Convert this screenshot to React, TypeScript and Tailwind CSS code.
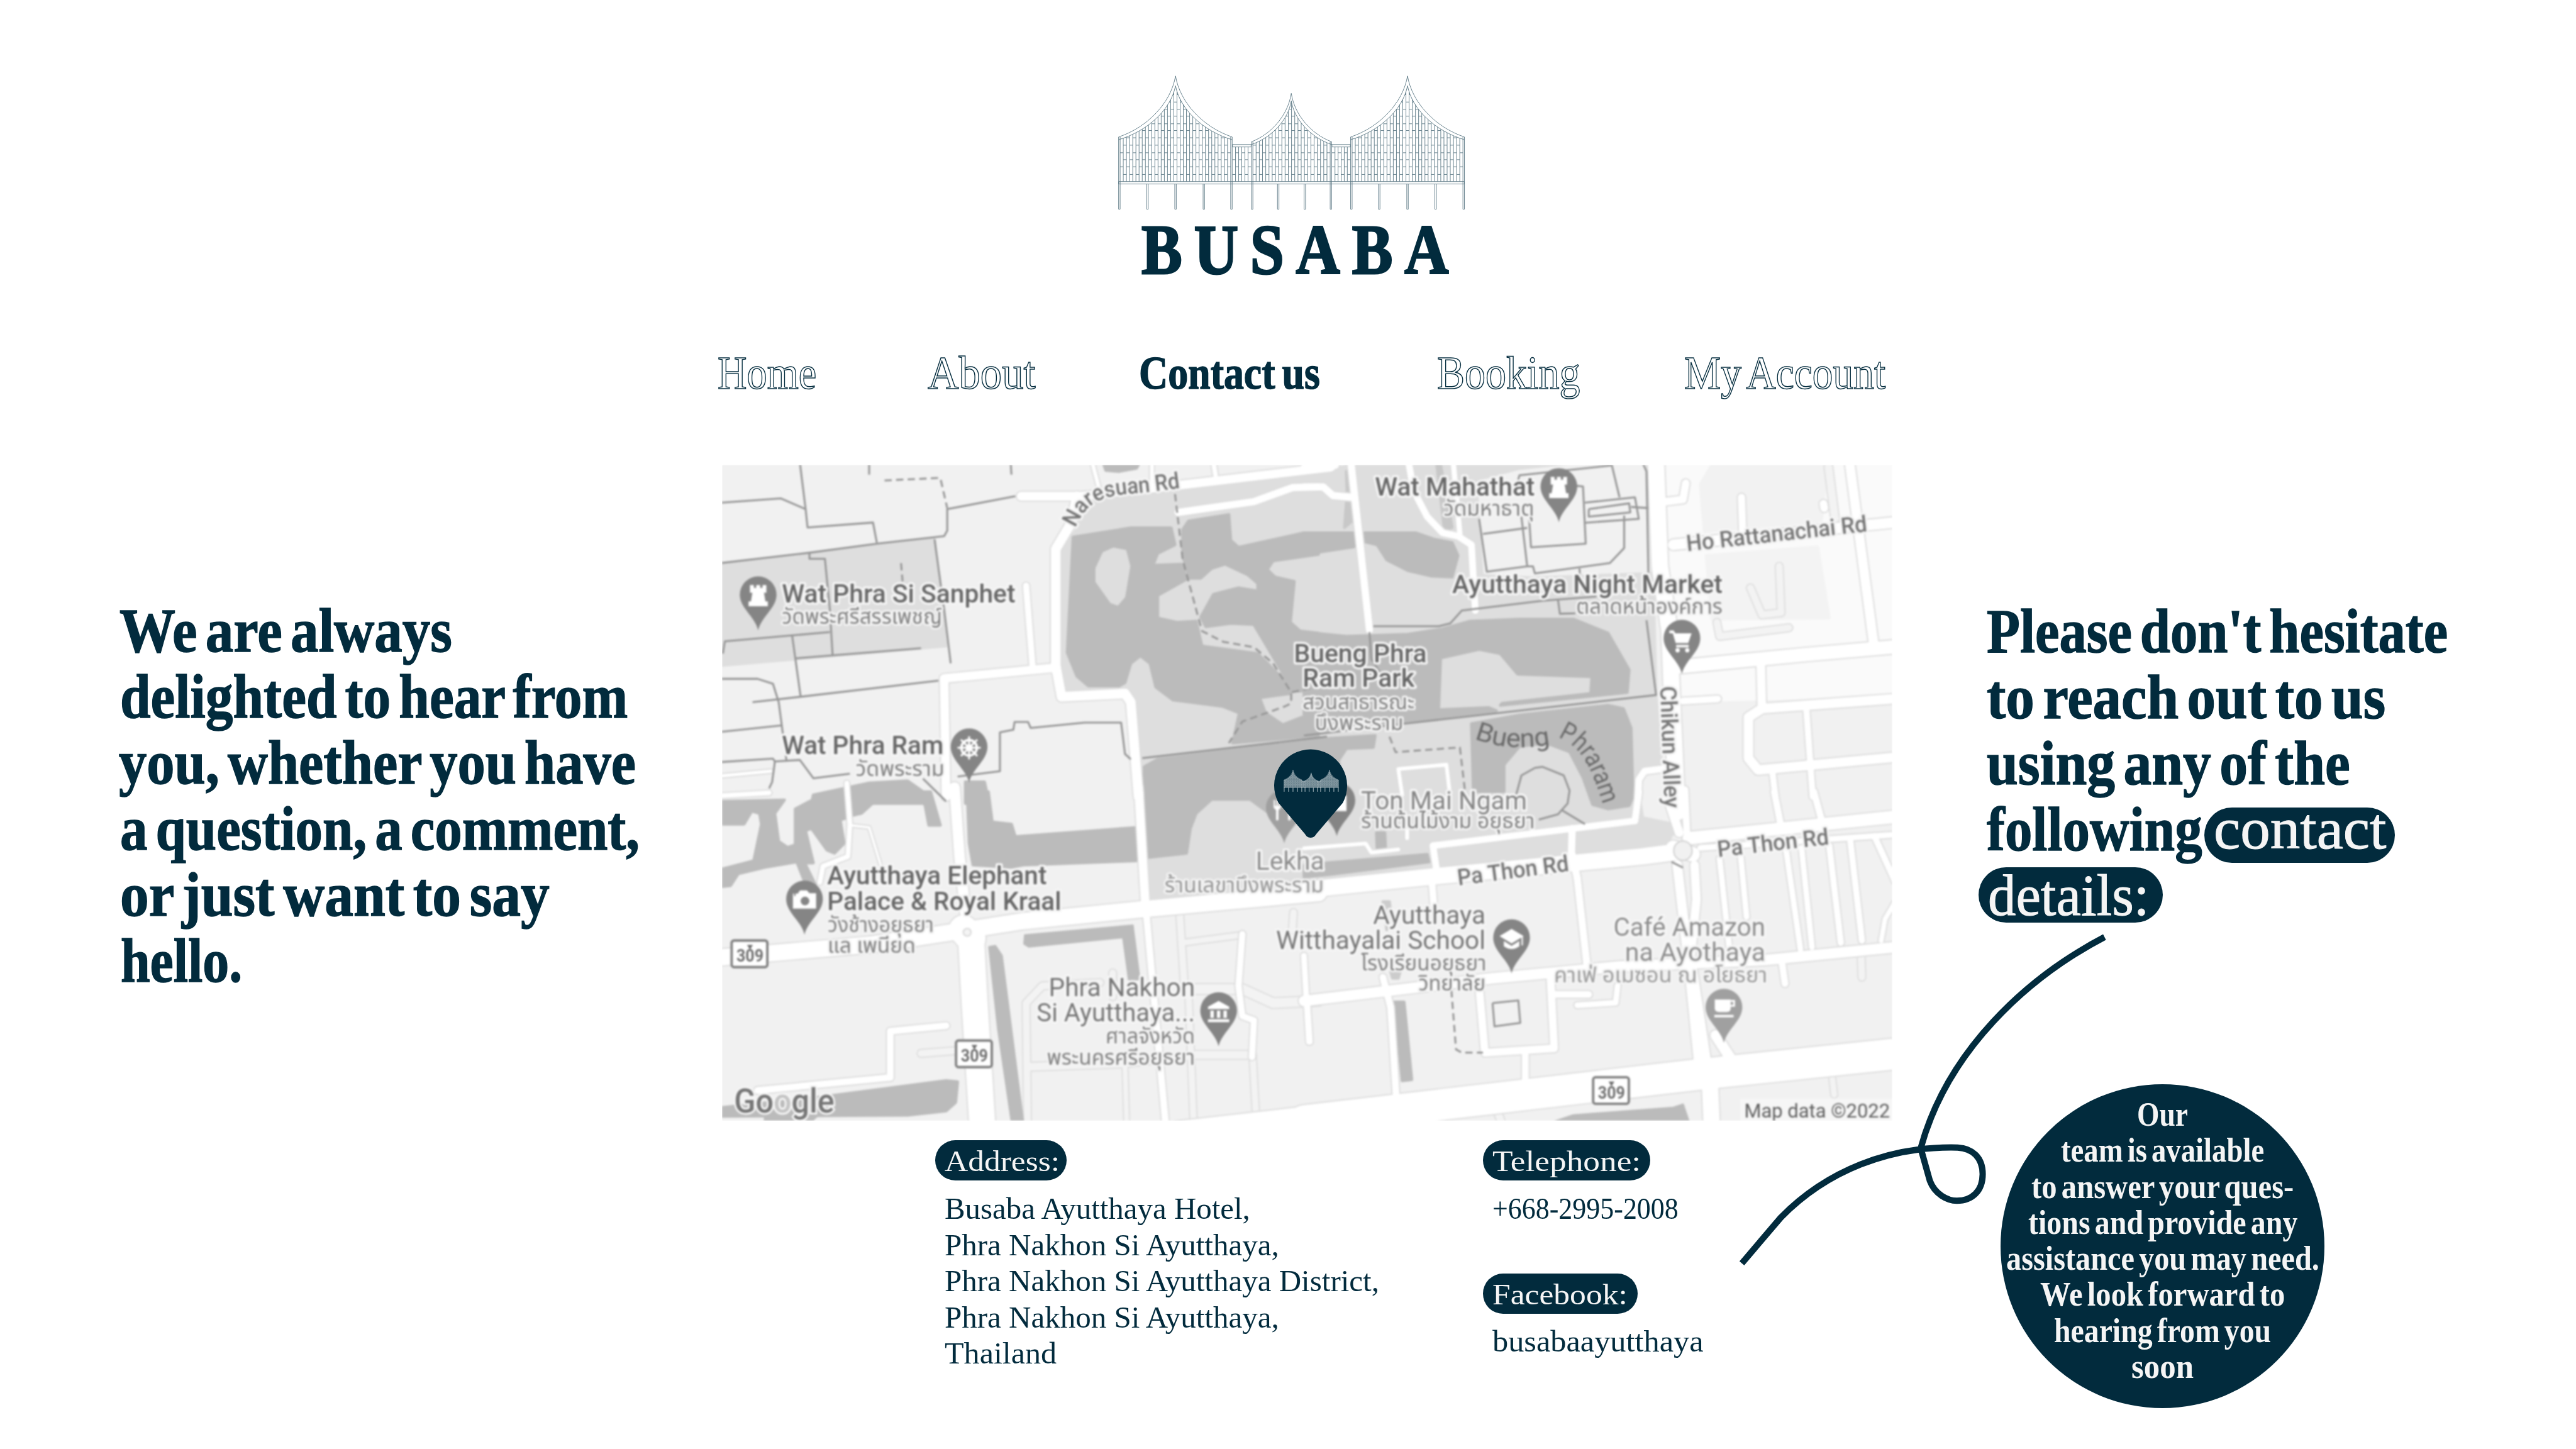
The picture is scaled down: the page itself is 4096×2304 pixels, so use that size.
import { useLayoutEffect, useRef, useState, type ReactNode } from "react";

/* ---------- text helper: one line condensed to a measured width ---------- */

function Fit({ w, className = "", children }: { w: number; className?: string; children: ReactNode }) {
  const ref = useRef<HTMLSpanElement>(null);
  const [scale, setScale] = useState(1);
  useLayoutEffect(() => {
    if (ref.current) setScale(w / ref.current.offsetWidth);
  }, [w]);
  return (
    <span className={"block whitespace-nowrap " + className} style={{ width: w }}>
      <span ref={ref} className="inline-block origin-left align-top" style={{ transform: `scaleX(${scale})` }}>
        {children}
      </span>
    </span>
  );
}

/* ---------- pavilion drawing ---------- */

type House = { l: number; r: number; apex: number; top: number; inner: number; eave: number };
const houses: House[] = [
  { l: 72, r: 533, apex: 303, top: 82, inner: 143, eave: 461 },
  { l: 611, r: 937, apex: 773, top: 190, inner: 237, eave: 491 },
  { l: 1014, r: 1476, apex: 1245, top: 82, inner: 143, eave: 461 },
];
const rows = [198, 244, 289, 332, 379, 421, 466, 512, 559, 602, 646, 694];

function roof(h: House, top: number, eave: number) {
  const a = h.apex - h.l;
  const b = h.r - h.apex;
  const d = eave - top;
  return `M${h.l},${eave} C${h.l + a * 0.51},${eave - d * 0.16} ${h.l + a * 0.92},${eave - d * 0.56} ${h.apex},${top} C${
    h.r - b * 0.92
  },${eave - d * 0.56} ${h.r - b * 0.51},${eave - d * 0.16} ${h.r},${eave}`;
}

function lattice(l: number, r: number, step: number, top: number, offset: number) {
  let d = "";
  const n = Math.round((r - l) / step);
  const s = (r - l) / n;
  for (let i = 1; i < n; i++) d += `M${l + i * s},${top}V738`;
  rows.forEach((y, j) => {
    if (y < top) return;
    for (let i = (j + offset) % 2; i < n; i += 2) d += `M${l + i * s},${y}h${s}`;
  });
  return d;
}

function Pavilion({ id, className }: { id: string; className: string }) {
  return (
    <svg viewBox="60 75 1430 840" preserveAspectRatio="none" className={className} fill="none" stroke="currentColor">
      <defs>
        {houses.map((h, i) => (
          <clipPath key={i} id={`${id}-${i}`}>
            <path d={roof(h, h.inner, h.eave + 17) + ` V740 H${h.l} Z`} />
          </clipPath>
        ))}
      </defs>
      {houses.map((h, i) => (
        <g key={i}>
          <path vectorEffect="non-scaling-stroke" d={roof(h, h.top, h.eave)} />
          <path vectorEffect="non-scaling-stroke" d={roof(h, h.inner, h.eave + 17)} />
          <g clipPath={`url(#${id}-${i})`}>
            <path vectorEffect="non-scaling-stroke" d={lattice(h.l + 6, h.r - 6, 12.9, 140, i === 1 ? 1 : 0)} />
          </g>
          <path vectorEffect="non-scaling-stroke" d={`M${h.l},${h.eave}V910h6V${h.eave}M${h.r},${h.eave}V910h-6V${h.eave}`} />
        </g>
      ))}
      <path vectorEffect="non-scaling-stroke" d="M534,508H610V523H534ZM938,508H1013V523H938Z" />
      <path vectorEffect="non-scaling-stroke" d={lattice(534, 610, 12.7, 523, 1) + lattice(938, 1013, 12.7, 523, 0)} />
      <path vectorEffect="non-scaling-stroke" d="M72,738H1476V753H72Z" />
      <path
        vectorEffect="non-scaling-stroke"
        d="M186,753V910h6V753M300,753V910h6V753M415,753V910h6V753M717,753V910h6V753M825,753V910h6V753M1127,753V910h6V753M1242,753V910h6V753M1356,753V910h6V753"
      />
    </svg>
  );
}

/* ---------- map data: four survey tiles, each with its own origin ---------- */

type Tile = "nw" | "ne" | "sw" | "se";
const origin: Record<Tile, [number, number]> = { nw: [1480, 950], ne: [2700, 950], sw: [1480, 1640], se: [2700, 1640] };

function at(tile: Tile, list: string) {
  const [ox, oy] = origin[tile];
  return list
    .trim()
    .split(/\s+/)
    .map((p) => {
      const [x, y] = p.split(",").map(Number);
      return `${(ox + x * 0.7972).toFixed(1)},${(oy + y * 0.4464).toFixed(1)}`;
    })
    .join(" ");
}

const areas: [Tile, string, string][] = [
  ["ne", "#fafafa", "900,29 1540,29 1540,1100 1090,1120 980,1120"],
  ["ne", "#f2f2f2", "1060,29 1360,29 1345,290 1040,340 1030,120"],
  ["ne", "#f3f3f3", "1045,450 1335,410 1365,740 1060,745"],
  ["nw", "#dedede", "15,490 245,440 570,375 600,870 15,960"],
  ["nw", "#dedede", "940,190 1000,170 1200,130 1590,55 1590,1568 1100,1568 1090,1100 1070,1070 910,1080 890,960 895,430 940,330"],
  ["ne", "#dedede", "0,75 130,29 900,29 915,1100 930,1440 870,1450 865,1568 0,1568"],
  ["ne", "#f1f1f1", "455,110 560,60 720,29 885,29 900,520 600,540 470,530"],
  ["se", "#dedede", "0,0 870,0 880,120 960,150 960,190 940,250 700,290 340,350 0,420"],
  ["sw", "#dedede", "1110,0 1568,0 1568,475 1120,515"],
  ["nw", "#bbbbbb", "1010,29 1100,29 1095,45 1050,60 1015,55"],
  ["nw", "#bbbbbb", "930,365 1080,322 1185,322 1195,400 1150,440 1138,495 1212,490 1225,560 1150,635 1150,740 1200,760 1250,755 1265,870 1410,905 1480,1030 1495,1090 1415,1110 1430,1180 1475,1235 1525,1200 1568,1215 1568,1285 1345,1320 1362,1180 1320,1150 1190,1120 1145,1060 1130,950 1105,915 1080,950 1065,1040 1050,1055 970,1055 940,1010 915,900"],
  ["nw", "#dedede", "1035,420 1065,430 1075,500 1062,640 1045,675 1030,665 992,570 992,510 1010,440"],
  ["nw", "#bbbbbb", "1215,330 1230,290 1335,260 1340,380 1360,412 1530,345 1568,345 1568,445 1450,475 1435,515 1455,550 1505,570 1495,760 1520,800 1568,810 1568,1075 1500,1080 1470,980 1400,770 1340,765 1275,780 1262,735 1295,630 1360,600 1410,615 1410,580 1385,540 1325,490 1290,510 1262,555 1232,555 1215,450"],
  ["nw", "#bbbbbb", "1115,1430 1150,1395 1568,1305 1568,1568 1115,1568"],
  ["ne", "#bbbbbb", "0,345 130,345 130,410 0,445"],
  ["ne", "#bbbbbb", "155,345 290,345 340,375 385,390 400,450 385,550 330,545 270,520 215,470 190,400 155,385"],
  ["ne", "#c8c8c8", "110,60 125,60 125,290 105,320 112,160"],
  ["ne", "#c8c8c8", "345,29 355,29 385,320 365,335"],
  ["ne", "#bbbbbb", "0,805 110,825 270,815 360,790 430,755 560,745 700,745 790,810 845,980 840,1085 510,1145 515,1135 745,1090 748,1012 555,1000 510,905 455,885 355,925 350,1165 480,1155 500,1170 300,1212 0,1268"],
  ["ne", "#bbbbbb", "0,1305 185,1285 180,1340 110,1345 90,1400 100,1568 0,1568"],
  ["ne", "#bbbbbb", "435,1230 560,1190 790,1145 830,1160 850,1250 855,1568 845,1610 790,1625 750,1605 725,1480 690,1360 630,1320 560,1335 520,1420 520,1545 440,1545"],
  ["nw", "#bbbbbb", "255,1560 400,1505 500,1495 560,1570 560,1600 250,1600"],
  ["nw", "#bbbbbb", "650,1500 700,1500 712,1600 650,1600"],
  ["sw", "#bbbbbb", "15,45 180,38 155,100 165,230 188,258 210,245 230,320 260,430 235,430 212,325 130,350 60,380 40,435 15,440 15,360 100,320 120,150 115,100 95,90 75,150 15,150"],
  ["sw", "#bbbbbb", "208,80 245,45 290,10 345,0 345,120 325,130 335,240 310,285 290,270 250,170 235,180 255,330 225,330 208,240"],
  ["sw", "#bbbbbb", "355,0 560,0 585,155 555,155 545,60 510,10 470,0 430,20 380,100 355,110"],
  ["sw", "#bbbbbb", "655,0 710,0 720,140 770,150 780,208 1100,165 1095,320 800,340 770,350 670,340 660,240"],
  ["sw", "#bbbbbb", "1115,0 1450,0 1440,100 1390,35 1290,35 1250,100 1235,170 1225,285 1125,305"],
  ["sw", "#bbbbbb", "15,1465 300,1410 600,1340 630,1345 625,1440 600,1480 500,1500 15,1505"],
  ["sw", "#bbbbbb", "130,1500 265,1500 250,1525 130,1525"],
  ["se", "#bbbbbb", "60,330 320,290 325,325 60,385 0,395 0,340"],
  ["se", "#bbbbbb", "188,190 210,190 212,265 190,270"],
  ["se", "#bbbbbb", "235,975 260,975 280,1335 255,1340"],
  ["se", "#cccccc", "205,510 222,510 228,600 215,640"],
  ["se", "#cccccc", "225,835 250,835 245,865 230,865"],
];
const upperAreas: [Tile, string, string][] = [
  ["sw", "#bbbbbb", "712,720 728,715 745,760 800,1525 770,1525 735,1100"],
  ["sw", "#bbbbbb", "805,665 1085,620 1103,870 1075,870 1060,675 815,718 803,705"],
  ["se", "#bbbbbb", "650,1530 700,1500 960,1465 985,1450 1000,1530"],
];

/* lanes carry an outline only, roads are filled white */
const lanes: [Tile, number, string][] = [
  ["ne", 14, "1235,500 1240,715 1190,725 1160,600"],
  ["ne", 14, "1073,760 1080,825 1260,785"],
  ["ne", 16, "1363,40 1380,280"],
  ["sw", 14, "630,1200 535,1213"],
  ["sw", 14, "1207,560 1220,920"],
  ["sw", 12, "1215,700 1365,665"],
  ["sw", 20, "1230,915 1370,915 1450,980 1568,970"],
  ["sw", 14, "1503,560 1500,640"],
  ["sw", 14, "812,1568 808,980 850,900 1000,885"],
  ["sw", 14, "1033,840 1033,950"],
  ["sw", 16, "820,1275 1060,1260 1250,1220 1395,1220"],
  ["sw", 10, "1065,1270 1070,1568"],
  ["sw", 13, "1230,930 1243,1520"],
  ["sw", 13, "1397,1230 1405,1490"],
  ["se", 14, "1448,760 1450,860"],
  ["se", 12, "1373,1330 1378,1405"],
  ["se", 15, "500,1470 520,1568"],
];

const roads: [Tile, number, string][] = [
  ["nw", 18, "795,175 950,175 1200,125 1600,40"],
  ["ne", 18, "0,48 80,29"],
  ["nw", 8, "980,20 1000,155"],
  ["nw", 8, "1135,20 1135,120"],
  ["nw", 10, "1295,20 1300,75"],
  ["nw", 20, "940,175 925,300 885,420 885,960 900,1105 1065,1090 1080,1130 1100,1568"],
  ["nw", 18, "885,970 825,980 595,1020 600,1568"],
  ["nw", 13, "825,970 808,590"],
  ["nw", 15, "1203,250 1400,200 1500,135 1568,132"],
  ["ne", 15, "0,132 50,132 75,172 125,180"],
  ["ne", 15, "122,20 170,795"],
  ["ne", 14, "272,20 285,150 320,270 360,345 400,360 435,400 445,705"],
  ["ne", 11, "388,20 405,350"],
  ["ne", 34, "915,20 925,500 950,800 955,1050 970,1640"],
  ["se", 18, "945,30 975,190"],
  ["ne", 22, "960,400 1568,290"],
  ["ne", 20, "1418,20 1482,880"],
  ["ne", 16, "1350,210 1352,230"],
  ["ne", 16, "992,115 985,190 940,200"],
  ["ne", 15, "1137,180 1140,340"],
  ["ne", 28, "980,965 1300,910 1568,868"],
  ["ne", 18, "1187,940 1190,1160"],
  ["ne", 14, "985,1125 1075,1115"],
  ["ne", 20, "1568,1110 1300,1145 1190,1160 1155,1200 1155,1390 1180,1445 1568,1380"],
  ["ne", 13, "1305,1150 1322,1568"],
  ["ne", 13, "1217,1450 1225,1568"],
  ["ne", 14, "950,1435 885,1450 870,1490 868,1568"],
  ["se", 14, "870,0 860,135 700,170 335,250 345,370"],
  ["ne", 8, "255,1560 245,1440 370,1420 378,1540"],
  ["sw", 34, "0,770 200,740 400,710 620,650 800,600 1110,545 1568,470"],
  ["se", 34, "0,455 350,390 880,300 985,275"],
  ["sw", 22, "622,-20 635,300 650,560"],
  ["sw", 60, "645,640 665,680"],
  ["sw", 54, "665,680 675,1000 695,1568"],
  ["sw", 18, "1100,-20 1117,500"],
  ["sw", 14, "1117,500 1135,850 1172,1568"],
  ["sw", 10, "342,-40 350,150 345,300 280,345 272,420"],
  ["sw", 5, "350,155 400,165 430,340"],
  ["sw", 10, "0,20 140,5"],
  ["nw", 7, "0,1475 145,1450"],
  ["sw", 14, "600,1085 455,1110 455,1325 110,1385"],
  ["sw", 13, "1370,660 1360,900 1370,1040 1400,1060 1395,1230"],
  ["sw", 12, "1530,760 1543,1160"],
  ["sw", 64, "1150,1610 1568,1525"],
  ["se", 64, "0,1525 1030,1310 1568,1210"],
  ["se", 34, "1055,1350 1060,1568"],
  ["se", 14, "332,410 337,525"],
  ["se", 15, "697,170 695,280 710,400 735,800"],
  ["se", 8, "0,262 160,240 175,282 245,268"],
  ["se", 8, "268,180 268,215"],
  ["se", 26, "1000,215 1568,110"],
  ["se", 12, "1030,260 1568,195"],
  ["se", 30, "960,260 1010,290"],
  ["se", 14, "990,-10 995,190"],
  ["se", 20, "970,340 1000,800 1025,1240"],
  ["se", 18, "1015,340 1020,500 1005,760 1045,1230"],
  ["se", 22, "1070,1130 1110,1240"],
  ["se", 12, "1080,310 1105,720"],
  ["se", 12, "1135,300 1150,580"],
  ["se", 12, "1253,270 1290,730"],
  ["se", 12, "1293,260 1320,720"],
  ["se", 13, "1365,250 1395,700"],
  ["se", 13, "1420,230 1450,690"],
  ["se", 13, "1482,205 1545,450"],
  ["se", 10, "1540,500 1510,590 1500,690"],
  ["se", 14, "1222,0 1238,145"],
  ["se", 14, "1325,0 1345,130"],
  ["se", 22, "1568,715 1200,780 820,810 490,865 0,970"],
  ["se", 16, "455,900 470,1210 650,1190 640,840"],
  ["se", 14, "575,1210 575,1380"],
  ["se", 14, "205,860 225,1000 240,1430"],
  ["se", 14, "650,940 740,940"],
  ["se", 12, "815,900 810,978 710,990"],
  ["se", 12, "8,970 15,1160"],
  ["se", 14, "1242,790 1250,890"],
];

const lines: [Tile, string][] = [
  ["nw", "15,205 170,185 235,235"],
  ["nw", "220,20 235,235 240,320 410,297 420,390"],
  ["nw", "15,485 245,437 420,395 595,360 603,335 603,235 780,175"],
  ["nw", "245,437 245,465 285,465 298,700 305,910"],
  ["nw", "570,375 595,700 612,950"],
  ["nw", "20,905 25,848 298,805"],
  ["nw", "200,822 222,1105"],
  ["nw", "210,927 535,880"],
  ["nw", "97,1130 222,1105 580,1030"],
  ["nw", "15,1022 110,1022 150,1045 165,1130 185,1400"],
  ["nw", "15,1268 172,1238"],
  ["nw", "15,1408 150,1392 155,1405 220,1398 255,1483 350,1462"],
  ["nw", "155,1405 148,1500 140,1530"],
  ["nw", "400,20 400,75"],
  ["nw", "768,20 770,75"],
  ["nw", "540,1485 600,1590"],
  ["nw", "630,1475 740,1450 740,1270 775,1258 778,1222 813,1222 820,1250 960,1225 1055,1225 1065,1370 1080,1395"],
  ["nw", "1110,1390 1590,1290"],
  ["ne", "0,1285 260,1230 915,1097 890,750"],
  ["ne", "895,530 890,60 880,20"],
  ["ne", "180,778 350,778 380,765 410,705 620,660 760,640"],
  ["ne", "660,655 665,720 705,718"],
  ["ne", "170,805 175,930 200,1000"],
  ["ne", "455,280 475,525 580,500 565,270"],
  ["ne", "465,350 580,322"],
  ["ne", "580,500 595,500 600,533 795,485 832,415 832,265"],
  ["ne", "555,110 560,78 800,32 820,180"],
  ["ne", "585,280 590,412 732,395 725,130 700,125"],
  ["ne", "730,205 860,180 870,280 730,298"],
  ["ne", "740,235 845,208 848,250 740,270 740,235"],
  ["ne", "850,225 895,230"],
  ["ne", "716,510 717,545"],
  ["ne", "550,1568 565,1470 600,1435 620,1430 675,1470 690,1540 685,1600 660,1650 610,1675"],
  ["se", "670,85 730,150"],
  ["se", "490,980 557,968 562,1072 495,1088 490,980"],
  ["se", "955,325 985,352"],
];
const dashed: [Tile, string][] = [
  ["nw", "440,102 585,90 603,230"],
  ["nw", "1195,165 1215,470 1265,800 1320,850 1400,875 1450,950 1497,1085 1560,1060"],
  ["nw", "1497,1090 1497,1135 1480,1150 1370,1220 1335,1320"],
  ["nw", "483,485 487,570"],
  ["ne", "222,1290 238,1362 405,1340 420,1568"],
  ["se", "383,920 395,1195 410,1210 465,1210"],
];

type Label = [x: number, y: number, w: number, text: string, color?: string, weight?: number];
const names: Label[] = [
  [1618, 1248, 484, "Wat Phra Si Sanphet", "#666666", 500],
  [1618, 1562, 335, "Wat Phra Ram", "#666666", 500],
  [2847, 1027, 331, "Wat Mahathat", "#666666", 500],
  [3007, 1229, 560, "Ayutthaya Night Market", "#666666", 500],
  [2679, 1372, 275, "Bueng Phra", "#666666", 500],
  [2697, 1423, 232, "Ram Park", "#666666", 500],
  [1712, 1832, 455, "Ayutthaya Elephant", "#666666", 500],
  [1712, 1885, 485, "Palace & Royal Kraal", "#666666", 500],
  [2171, 2063, 303, "Phra Nakhon", "#757575", 400],
  [2146, 2115, 328, "Si Ayutthaya...", "#757575", 400],
  [2843, 1913, 233, "Ayutthaya", "#757575", 400],
  [2642, 1965, 434, "Witthayalai School", "#757575", 400],
  [2818, 1676, 344, "Ton Mai Ngam", "#858585", 400],
  [2600, 1802, 142, "Lekha", "#8d8d8d", 400],
  [3341, 1938, 315, "Café Amazon", "#8d8d8d", 400],
  [3365, 1990, 291, "na Ayothaya", "#8d8d8d", 400],
];
const thai: Label[] = [
  [1618, 1293, 332, "วัดพระศรีสรรเพชญ์"],
  [1771, 1607, 184, "วัดพระราม"],
  [2989, 1068, 188, "วัดมหาธาตุ"],
  [3264, 1272, 303, "ตลาดหน้าองค์การ"],
  [2697, 1470, 232, "สวนสาธารณะ"],
  [2722, 1512, 184, "บึงพระราม"],
  [2818, 1716, 360, "ร้านต้นไม้งาม อยุธยา"],
  [2411, 1848, 330, "ร้านเลขาบึงพระราม", "#959595"],
  [1713, 1931, 220, "วังช้างอยุธยา"],
  [1713, 1973, 182, "แล เพนียด"],
  [2289, 2161, 185, "ศาลจังหวัด"],
  [2167, 2205, 307, "พระนครศรีอยุธยา"],
  [2818, 2010, 260, "โรงเรียนอยุธยา"],
  [2937, 2051, 139, "วิทยาลัย"],
  [3218, 2034, 442, "คาเฟ่ อเมซอน ณ อโยธยา", "#9a9a9a"],
];

/* pin glyphs are drawn around the centre of the pin's head */
const glyphs = {
  rook: <path d="M-17,-22h8v6h5v-6h8v6h5v-6h8v16h-5l3,18h5v10h-40v-10h5l3,-18h-5z" />,
  wheel: (
    <g fill="none" stroke="#fff" strokeWidth="5">
      <circle r="16" />
      <circle r="5" />
      <path strokeWidth="4" d="M0,-24V24M-24,0H24M-17,-17L17,17M17,-17L-17,17" />
    </g>
  ),
  cart: (
    <g>
      <path d="M-26,-18h9l3,6h34l-7,20h-26l-6,-20h-7z" />
      <path d="M-12,12h26v5h-26z" />
      <circle cx="-9" cy="23" r="4.5" />
      <circle cx="11" cy="23" r="4.5" />
    </g>
  ),
  camera: (
    <g>
      <path d="M-24,-14h10l5,-6h14l5,6h14v32h-48z" />
      <circle cx="1" cy="2" r="9" fill="#858585" />
      <path stroke="#858585" strokeWidth="3" d="M-20,-22v14M-27,-15h14" />
    </g>
  ),
  museum: <path d="M0,-22L22,-10v5h-44v-5zM-17,-2h7v15h-7zM-3.500,-2h7v15h-7zM10,-2h7v15h-7zM-22,16h44v6h-44z" />,
  school: (
    <g>
      <path d="M0,-20L25,-5L0,10L-25,-5z" />
      <path d="M-16,5L0,15L16,5V16Q0,27 -16,16z" />
      <path fill="none" stroke="#fff" strokeWidth="3" d="M22,-5V14" />
    </g>
  ),
  cup: (
    <g>
      <path d="M-19,-18h33v18q0,8 -8,8h-16q-9,0 -9,-8z" />
      <path fill="none" stroke="#fff" strokeWidth="4" d="M14,-15h7v10h-7" />
      <path d="M-20,14h40v5h-40z" />
    </g>
  ),
  fork: <path d="M-22,-18h3v12h3v-12h3v12h3v-12h3v16l-5,5v21h-5v-21l-5,-5zM8,-22q10,4 10,22h-5v24h-5z" />,
  bag: <path d="M-18,-12h8q0,-12 10,-12q10,0 10,12h10v32h-38z" />,
};
const pins: [number, number, keyof typeof glyphs, string][] = [
  [1569, 1306, "rook", "#858585"],
  [2006, 1621, "wheel", "#858585"],
  [3228, 1082, "rook", "#858585"],
  [3483, 1396, "cart", "#858585"],
  [1665, 1936, "camera", "#858585"],
  [2523, 2167, "museum", "#858585"],
  [3130, 2016, "school", "#858585"],
  [3570, 2160, "cup", "#a0a0a0"],
  [2659, 1747, "fork", "#a0a0a0"],
  [2768, 1732, "bag", "#858585"],
];
const shields: [number, number][] = [
  [1514, 1948],
  [1979, 2155],
  [3299, 2231],
];

function CityMap() {
  return (
    <svg viewBox="1494 963 2425 1358" preserveAspectRatio="none" className="block h-full w-full blur-[1.4px]">
      <rect x="1480" y="950" width="2460" height="1400" fill="#f1f1f1" />
      {areas.map(([t, c, p], i) => (
        <polygon key={i} points={at(t, p)} fill={c} stroke={c} strokeWidth="6" strokeLinejoin="round" />
      ))}
      <g fill="none" stroke="#dddddd" strokeLinecap="round" strokeLinejoin="round">
        {lanes.map(([t, w, p], i) => (
          <polyline key={i} points={at(t, p)} strokeWidth={w + 5} />
        ))}
      </g>
      <g fill="none" stroke="#f3f3f3" strokeLinecap="round" strokeLinejoin="round">
        {lanes.map(([t, w, p], i) => (
          <polyline key={i} points={at(t, p)} strokeWidth={w} />
        ))}
      </g>
      <g fill="none" stroke="#dcdcdc" strokeLinecap="round" strokeLinejoin="round">
        {roads.map(([t, w, p], i) => (
          <polyline key={i} points={at(t, p)} strokeWidth={w + 5} />
        ))}
      </g>
      <g fill="none" stroke="#ffffff" strokeLinecap="round" strokeLinejoin="round">
        {roads.map(([t, w, p], i) => (
          <polyline key={i} points={at(t, p)} strokeWidth={w} />
        ))}
      </g>
      {upperAreas.map(([t, c, p], i) => (
        <polygon key={i} points={at(t, p)} fill={c} stroke={c} strokeWidth="4" strokeLinejoin="round" />
      ))}
      <circle cx="2002" cy="1931" r="8" fill="#f4f4f4" stroke="#dadada" strokeWidth="3" />
      <ellipse cx="3485" cy="1762" rx="19" ry="20" fill="#f1f1f1" stroke="#d4d4d4" strokeWidth="3" />
      <g fill="none" stroke="#979797" strokeWidth="4" strokeLinejoin="round">
        {lines.map(([t, p], i) => (
          <polyline key={i} points={at(t, p)} />
        ))}
        {dashed.map(([t, p], i) => (
          <polyline key={i} points={at(t, p)} strokeDasharray="15 9" />
        ))}
      </g>

      {pins.map(([x, y, g, c], i) => (
        <g key={i} transform={`translate(${x} ${y})`}>
          <path fill={c} d="M0,0C-6,-28 -38,-46 -38,-74A38,38 0 1 1 38,-74C38,-46 6,-28 0,0Z" />
          <g fill="#ffffff" transform="translate(0 -72)">
            {glyphs[g]}
          </g>
        </g>
      ))}

      <g className="font-['Roboto',sans-serif]" stroke="#f6f6f6" strokeWidth="9" strokeLinejoin="round" paintOrder="stroke">
        {names.map(([x, y, w, s, c, wt], i) => (
          <text key={i} x={x} y={y} textLength={w} lengthAdjust="spacingAndGlyphs" fontSize="53" fontWeight={wt} fill={c}>
            {s}
          </text>
        ))}
        <g fontSize="47" fontWeight="500" fill="#757575">
          <path id="naresuan" d="M2226,1094C2246,1050 2268,1030 2330,1024Q2390,1019 2452,1010" fill="none" stroke="none" />
          <text>
            <textPath href="#naresuan" textLength="248" lengthAdjust="spacingAndGlyphs">
              Naresuan Rd
            </textPath>
          </text>
          <text transform="translate(3494 1142) rotate(-6.3)" textLength="376" lengthAdjust="spacingAndGlyphs">
            Ho Rattanachai Rd
          </text>
          <text transform="translate(3020 1834) rotate(-7.500)" textLength="232" lengthAdjust="spacingAndGlyphs">
            Pa Thon Rd
          </text>
          <text transform="translate(3558 1775) rotate(-6.500)" textLength="232" lengthAdjust="spacingAndGlyphs">
            Pa Thon Rd
          </text>
          <text transform="translate(3438 1422) rotate(88)" textLength="252" lengthAdjust="spacingAndGlyphs">
            Chikun Alley
          </text>
        </g>
        <g fill="#6a6a6a" fontSize="54" stroke="none">
          <path id="lake-west" d="M3053,1530Q3130,1560 3222,1540" fill="none" />
          <path id="lake-east" d="M3226,1527C3285,1550 3300,1610 3322,1674" fill="none" />
          <text>
            <textPath href="#lake-west" textLength="160" lengthAdjust="spacingAndGlyphs">
              Bueng
            </textPath>
          </text>
          <text>
            <textPath href="#lake-east" textLength="174" lengthAdjust="spacingAndGlyphs">
              Phraram
            </textPath>
          </text>
        </g>
      </g>
      <g
        className="font-['Noto_Sans_Thai','Noto_Sans','Loma',sans-serif]"
        stroke="#f4f4f4"
        strokeWidth="8"
        strokeLinejoin="round"
        paintOrder="stroke"
      >
        {thai.map(([x, y, w, s, c], i) => (
          <text key={i} x={x} y={y} textLength={w} lengthAdjust="spacingAndGlyphs" fontSize="44" fill={c ?? "#808080"}>
            {s}
          </text>
        ))}
      </g>

      {shields.map(([x, y], i) => (
        <g key={i}>
          <rect x={x} y={y} width="74" height="55" rx="5" fill="#ffffff" stroke="#808080" strokeWidth="5" />
          <path d={`M${x + 32},${y + 9}h12l-6,10z`} fill="#6b6b6b" />
          <text
            x={x + 10}
            y={y + 44}
            textLength="56"
            lengthAdjust="spacingAndGlyphs"
            fontSize="36"
            fontWeight="700"
            fill="#6f6f6f"
            className="font-['Roboto',sans-serif]"
          >
            309
          </text>
        </g>
      ))}

      <text
        x="1519"
        y="2304"
        textLength="208"
        lengthAdjust="spacingAndGlyphs"
        fontSize="69"
        fontWeight="500"
        fill="#757575"
        stroke="#f6f6f6"
        strokeWidth="8"
        paintOrder="stroke"
        className="font-['Roboto',sans-serif]"
      >
        Go<tspan fill="#c4c4c4">o</tspan>gle
      </text>
      <rect x="3604" y="2275" width="330" height="60" fill="#f6f6f6" />
      <text
        x="3612"
        y="2314"
        textLength="302"
        lengthAdjust="spacingAndGlyphs"
        fontSize="41"
        fill="#5f5f5f"
        className="font-['Roboto',sans-serif]"
      >
        Map data ©2022
      </text>
    </svg>
  );
}

function HotelPin() {
  return (
    <div className="absolute left-[878px] top-[450px] h-[143px] w-[116px]">
      <svg viewBox="-75 -186 150 186" className="absolute inset-0 h-full w-full" preserveAspectRatio="none">
        <path fill="#022b3d" d="M0,0C-6,0 -9,-3 -12,-8L-66,-72A75,75 0 1 1 66,-72L12,-8C9,-3 6,0 0,0Z" />
      </svg>
      <Pavilion id="pin" className="absolute left-[15px] top-[35px] h-[35px] w-[88px] stroke-[0.5px] text-[#c9d3d7]" />
    </div>
  );
}

/* ---------- page ---------- */

const nav: { label: string; w: number; gap: string; active?: boolean }[] = [
  { label: "Home", w: 157, gap: "" },
  { label: "About", w: 172, gap: "ml-[177px]" },
  { label: "Contact us", w: 288, gap: "ml-[164px]", active: true },
  { label: "Booking", w: 227, gap: "ml-[186px]" },
  { label: "My Account", w: 320, gap: "ml-[166px]" },
];

const intro: [string, number, string][] = [
  ["We are always", 529, "-ml-[3px]"],
  ["delighted to hear from", 807, "-ml-[2px]"],
  ["you, whether you have", 822, "-ml-[4px]"],
  ["a question, a comment,", 826, "-ml-[2px]"],
  ["or just want to say", 683, "-ml-[2px]"],
  ["hello.", 193, "-ml-[1px]"],
];

const invite: [string, number][] = [
  ["Please don't hesitate", 733],
  ["to reach out to us", 634],
  ["using any of the", 578],
];

const team: [string, number][] = [
  ["Our", 81],
  ["team is available", 323],
  ["to answer your ques-", 417],
  ["tions and provide any", 428],
  ["assistance you may need.", 498],
  ["We look forward to", 389],
  ["hearing from you", 345],
  ["soon", 99],
];

const address: [string, number][] = [
  ["Busaba Ayutthaya Hotel,", 486],
  ["Phra Nakhon Si Ayutthaya,", 532],
  ["Phra Nakhon Si Ayutthaya District,", 691],
  ["Phra Nakhon Si Ayutthaya,", 532],
  ["Thailand", 178],
];

function Tag({ label, text, className }: { label: string; text: number; className: string }) {
  return (
    <h3 className={"h-16 rounded-full bg-[#022b3d] pl-[15px] text-[47px] leading-[66px] text-[#f5f5f5] " + className}>
      <Fit w={text}>{label}</Fit>
    </h3>
  );
}

export default function App() {
  return (
    <div className="relative flex h-[2304px] w-[4096px] flex-col overflow-hidden bg-white font-['Liberation_Serif',serif] text-[#022b3d]">
      <header className="pt-[119px]">
        <div className="ml-[1774px] w-[560px]">
          <Pavilion id="logo" className="block h-[215px] w-[560px] stroke-[0.9px] text-[#5b7884]" />
          <h1 className="ml-[41px] mt-[6px] text-[113px] font-bold leading-none tracking-[22px] [-webkit-text-stroke:3px_#022b3d]">
            <Fit w={507}>BUSABA</Fit>
          </h1>
        </div>
        <nav className="ml-[1141px] mt-[101px] flex h-20 text-[73px] leading-[80px] [word-spacing:-0.08em]">
          {nav.map((n) => (
            <a key={n.label} className={n.gap}>
              <Fit
                w={n.w}
                className={
                  n.active
                    ? "font-bold [-webkit-text-stroke:1.5px_#022b3d]"
                    : "text-white [-webkit-text-stroke:1.5px_#022b3d]"
                }
              >
                {n.label}
              </Fit>
            </a>
          ))}
        </nav>
      </header>

      <main className="mt-[105px] flex flex-1">
        <section className="w-[1148px] shrink-0 pl-[193px] pt-[211px] text-[99px] font-bold leading-[105px] [-webkit-text-stroke:1.5px_#022b3d] [word-spacing:-0.1em]">
          {intro.map(([s, w, m]) => (
            <Fit key={s} w={w} className={m}>
              {s}
            </Fit>
          ))}
        </section>

        <section className="w-[1861px] shrink-0">
          <div className="relative h-[1043px] w-full">
            <div className="h-full w-full overflow-hidden">
              <CityMap />
            </div>
            <HotelPin />
          </div>
          <div className="flex pl-[339px] pt-[31px] text-[49px] leading-[57.6px]">
            <div className="w-[871px]">
              <Tag label="Address:" text={183} className="w-[209px]" />
              <div className="mt-[16px] pl-[15px]">
                {address.map(([s, w], i) => (
                  <Fit key={i} w={w}>
                    {s}
                  </Fit>
                ))}
              </div>
            </div>
            <div>
              <Tag label="Telephone:" text={236} className="w-[266px]" />
              <div className="mt-[16px] pl-[15px]">
                <Fit w={296}>+668-2995-2008</Fit>
              </div>
              <Tag label="Facebook:" text={215} className="mt-[74px] w-[246px]" />
              <div className="mt-[15px] pl-[15px]">
                <Fit w={336}>busabaayutthaya</Fit>
              </div>
            </div>
          </div>
        </section>

        <section className="flex-1 pt-[212px]">
          <div className="pl-[150px] text-[99px] font-bold leading-[105px] [word-spacing:-0.1em]">
            <div className="[-webkit-text-stroke:1.5px_#022b3d]">
              {invite.map(([s, w]) => (
                <Fit key={s} w={w}>
                  {s}
                </Fit>
              ))}
            </div>
            <div className="flex h-[105px]">
              <Fit w={343} className="[-webkit-text-stroke:1.5px_#022b3d]">
                following
              </Fit>
              <span className="ml-[3px] mt-[18px] h-[88px] w-[303px] rounded-full bg-[#022b3d] pl-[15px] text-[94px] font-normal leading-[66px] text-[#f5f5f5] [-webkit-text-stroke:1px_#f5f5f5]">
                <Fit w={274}>contact</Fit>
              </span>
            </div>
            <div className="-ml-[13px] h-[105px] pt-[8px]">
              <span className="block h-[88px] w-[293px] rounded-full bg-[#022b3d] pl-[15px] text-[94px] font-normal leading-[88px] text-[#f5f5f5] [-webkit-text-stroke:1px_#f5f5f5]">
                <Fit w={257}>details:</Fit>
              </span>
            </div>
          </div>
          <div className="ml-[172px] mt-[248px] flex h-[515px] w-[515px] flex-col items-center rounded-full bg-[#022b3d] pt-[20px] text-[54px] font-bold leading-[57.3px] text-[#f5f5f5] [word-spacing:-0.1em]">
            {team.map(([s, w]) => (
              <Fit key={s} w={w}>
                {s}
              </Fit>
            ))}
          </div>
        </section>
      </main>

      <svg
        viewBox="0 0 1568 1568"
        preserveAspectRatio="none"
        className="pointer-events-none absolute left-[2726px] top-[1444px] h-[829px] w-[1037px] fill-none stroke-[#022b3d] stroke-[10px]"
      >
        <path
          vectorEffect="non-scaling-stroke"
          d="M938,87C750,210 560,430 496,722L518,820C530,860 560,880 583,880C620,880 645,850 645,800C645,750 620,722 585,720C420,715 270,790 160,930L66,1068"
        />
      </svg>
    </div>
  );
}
